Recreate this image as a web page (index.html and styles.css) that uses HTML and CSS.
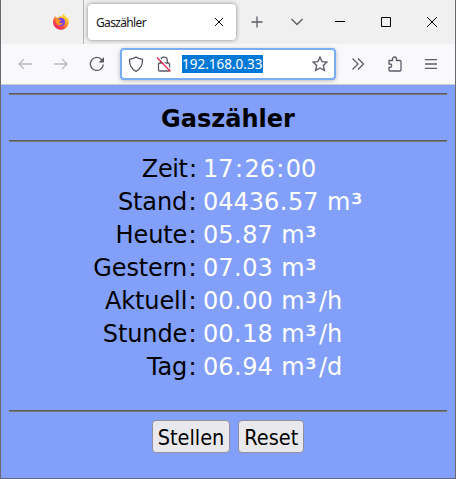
FILE: index.html
```html
<!DOCTYPE html>
<html lang="de">
<head>
<meta charset="utf-8">
<title>Gaszähler</title>
<link rel="stylesheet" href="styles.css">
</head>
<body>
<div class="window">
  <header class="tabbar">
    <div class="pinned">
      <svg width="18" height="18" viewBox="0 0 18 18">
        <defs>
          <linearGradient id="flame" x1="0.85" y1="0.1" x2="0.2" y2="0.95">
            <stop offset="0" stop-color="#ffe545"/><stop offset="0.4" stop-color="#ff9b25"/><stop offset="0.72" stop-color="#ff4545"/><stop offset="1" stop-color="#f02070"/>
          </linearGradient>
        </defs>
        <path fill="url(#flame)" d="M3.3 3.2 4.7 5l2-.6C7.500 3.500 8 3 8.600 2.900L9.500 4C10 2.400 10.900 1.200 12 1c.3 1.700 2.200 2.700 3.100 4.100l.5-.6c1.300 2 1.400 4.400 1 6.200A7.900 7.900 0 0 1 1 9.200C1 6.900 1.800 4.600 3.300 3.200z"/>
        <circle cx="9" cy="8.900" r="4" fill="#7542e5"/>
        <path fill="#ff9424" d="M3.500 6.500c1.500-.9 3-.6 4 .3l1.900.3c-.1 1-1.700 1.200-2 1.800.2 1.300 1.800 1.900 3.600.7-.7 2.100-2.400 3-4.100 2.700-2.200-.4-3.500-2.600-3.400-5.800z"/>
      </svg>
    </div>
    <div class="tab">
      <span class="tab-title">Gaszähler</span>
      <svg width="10" height="10" viewBox="0 0 10 10" class="ink"><path d="M1 1l8 8M9 1L1 9"/></svg>
    </div>
    <svg class="new-tab" width="12" height="12" viewBox="0 0 12 12"><path d="M6 .5v11M.5 6h11"/></svg>
    <svg class="all-tabs" width="14" height="8" viewBox="0 0 14 8"><path d="M1.500 1L7 6.500 12.500 1"/></svg>
    <svg class="min ink" width="10" height="10" viewBox="0 0 10 10"><path d="M0 4.500h10"/></svg>
    <svg class="max ink" width="10" height="10" viewBox="0 0 10 10"><path d="M.5.500h9v9h-9z"/></svg>
    <svg class="close ink" width="10" height="10" viewBox="0 0 10 10"><path d="M0 0l10 10M10 0L0 10"/></svg>
  </header>
  <nav class="toolbar">
    <svg class="back dim" width="14" height="12" viewBox="0 0 14 12"><path d="M14 6H1M6 1L1 6l5 5"/></svg>
    <svg class="forward dim" width="14" height="12" viewBox="0 0 14 12"><path d="M0 6h13M8 1l5 5-5 5"/></svg>
    <svg class="reload" width="16" height="16" viewBox="0 0 16 16"><path d="M13 4A6.500 6.500 0 1 0 14.300 8.500"/><path class="solid" d="M15 1v5.500H9.500z"/></svg>
    <div class="address">
      <svg class="shield" width="16" height="16" viewBox="0 0 16 16"><path d="M8 1C6.500 2.300 4 3 1.500 3.300c-.2 5.500 1.500 9.500 6.500 12 5-2.500 6.700-6.500 6.500-12C12 3 9.500 2.300 8 1z"/></svg>
      <svg class="lock" width="16" height="16" viewBox="0 0 16 16"><path d="M4.700 7V4.500a3.300 3.300 0 0 1 6.600 0V7M3.500 7h9c.7 0 1 .3 1 1v6c0 .7-.3 1-1 1h-9c-.7 0-1-.3-1-1V8c0-.7.300-1 1-1z"/><path class="gap" d="M2 1l14 14"/><path class="slash" d="M1 1.500l13.500 14"/></svg>
      <span class="url">192.168.0.33</span>
      <svg class="star" width="16" height="16" viewBox="0 0 16 16"><path d="M8 1l2 4.600 5 .5-3.700 3.400 1.100 5L8 11.900l-4.400 2.600 1.100-5L1 6.100l5-.5z"/></svg>
    </div>
    <svg class="overflow" width="14" height="12" viewBox="0 0 14 12"><path d="M1.500.5L7 6l-5.500 5.500M7 .5L12.500 6 7 11.500"/></svg>
    <svg class="extensions" width="16" height="16" viewBox="0 0 16 16"><path d="M2 4.500h3.500V3a2 2 0 0 1 4 0v1.500H13c.7 0 1 .3 1 1V14c0 .7-.3 1-1 1H3c-.7 0-1-.3-1-1v-2.500h1.300a1.800 1.800 0 0 0 0-3.500H2z"/></svg>
    <svg class="menu" width="12" height="10" viewBox="0 0 12 10"><path d="M0 .500h12M0 5h12M0 9.500h12"/></svg>
  </nav>
  <main class="page">
    <hr>
    <h1>Gaszähler</h1>
    <hr>
    <dl class="readings">
      <dt class="tight">Zeit<i>:</i></dt><dd>17<i>:</i>26<i>:</i>00</dd>
      <dt>Stand<i>:</i></dt><dd>04436<b>.</b>57 m<em>³</em></dd>
      <dt>Heute<i>:</i></dt><dd>05<b>.</b>87 m<em>³</em></dd>
      <dt>Gestern<i>:</i></dt><dd>07<b>.</b>03 m<em>³</em></dd>
      <dt>Aktuell<i>:</i></dt><dd>00<b>.</b>00 m<em>³</em>/h</dd>
      <dt>Stunde<i>:</i></dt><dd>00<b>.</b>18 m<em>³</em>/h</dd>
      <dt>Tag<i>:</i></dt><dd>06<b>.</b>94 m<em>³</em>/d</dd>
    </dl>
    <hr>
    <div class="actions"><button>Stellen</button><button>Reset</button></div>
  </main>
</div>
</body>
</html>
```
FILE: styles.css
```css
* { box-sizing: border-box; }
body { margin: 0; overflow: hidden; }
.window {
  width: 456px; height: 479px;
  display: flex; flex-direction: column;
  border: solid #67696e; border-width: 0 1px 1px;
  background: #829ff9;
}
svg { display: block; flex: none; fill: none; stroke: #5b5b66; stroke-width: 1.3; }
svg .solid { fill: #5b5b66; stroke: none; }
.ink { stroke: #000; stroke-width: 1; }
.dim { stroke: #b9b9be; }

.tabbar { height: 44px; display: flex; align-items: center; background: #f0f0f0; }
.pinned { width: 83px; height: 44px; padding: 13px 0 0 51px; border-right: 1px solid #b4b4b4; }
.pinned svg { stroke: none; }
.tab {
  width: 148px; height: 36px; margin-left: 4px; padding: 0 12px 0 8px;
  display: flex; align-items: center; justify-content: space-between;
  border-radius: 4px; background: #fff; box-shadow: 0 0 4px rgba(0,0,0,.45);
}
.tab-title { font: 12px "Noto Sans", sans-serif; letter-spacing: -.65px; color: #15141a; }
.new-tab { margin-left: 15px; }
.all-tabs { margin-left: 27px; }
.min { margin-left: 31px; }
.max { margin-left: 36px; }
.close { margin-left: 36px; }

.toolbar { height: 41px; display: flex; align-items: center; background: #f9f9fb; border-bottom: 1px solid #ccc; }
.back { margin-left: 17px; }
.forward { margin-left: 22px; }
.reload { margin-left: 21px; }
.address {
  width: 216px; height: 32px; margin-left: 15px; padding: 0 6px;
  display: flex; align-items: center;
  border: 2px solid #79aef2; border-radius: 4px; background: #fff;
  box-shadow: 0 1px 4px rgba(0,0,0,.25);
}
.lock { margin-left: 12px; }
.lock .gap { stroke: #fff; }
.lock .slash { stroke: #e22850; }
.url { width: 81px; height: 18px; margin-left: 10px; background: #0078d7; color: #fff; font: 13.500px/19px "Noto Sans", sans-serif; white-space: nowrap; }
.star { margin-left: auto; }
.overflow { margin-left: 15px; }
.extensions { margin-left: 22px; }
.menu { margin-left: 22px; }

.page { flex: 1; padding: 8px; font: 24px/33px "DejaVu Sans", Verdana, sans-serif; }
hr { height: 2px; margin: 0; border: 0; background: #777; border-top: 1px solid #5b5b5b; }
h1 { height: 45px; margin: 0; font-size: 24px; line-height: 49px; text-align: center; }
.readings { height: 268px; margin: 0; padding-top: 11px; display: grid; grid-template-columns: 189px 1fr; grid-auto-rows: 33px; column-gap: 5px; }
dt { text-align: right; letter-spacing: -.1px; }
dt.tight { letter-spacing: -.4px; }
dd { margin: 0; color: #fff; word-spacing: .8px; white-space: nowrap; }
i { font-style: normal; padding: 0 1.4px; }
b { font-weight: normal; padding: 0 .5px; }
em { padding: 0 2.5px 0 1px; font-style: normal; font-size: 27px; line-height: 1; vertical-align: -3px; -webkit-text-stroke: .4px #fff; }
.actions { margin-top: 8px; display: flex; justify-content: center; gap: 8px; }
button {
  height: 33px; padding: 1px 5px 0; border: 1px solid #8f8f9d; border-radius: 4px;
  background: #e9e9ed; color: #000; font: 21.500px/31px "DejaVu Sans Condensed", Tahoma, sans-serif;
}
```
